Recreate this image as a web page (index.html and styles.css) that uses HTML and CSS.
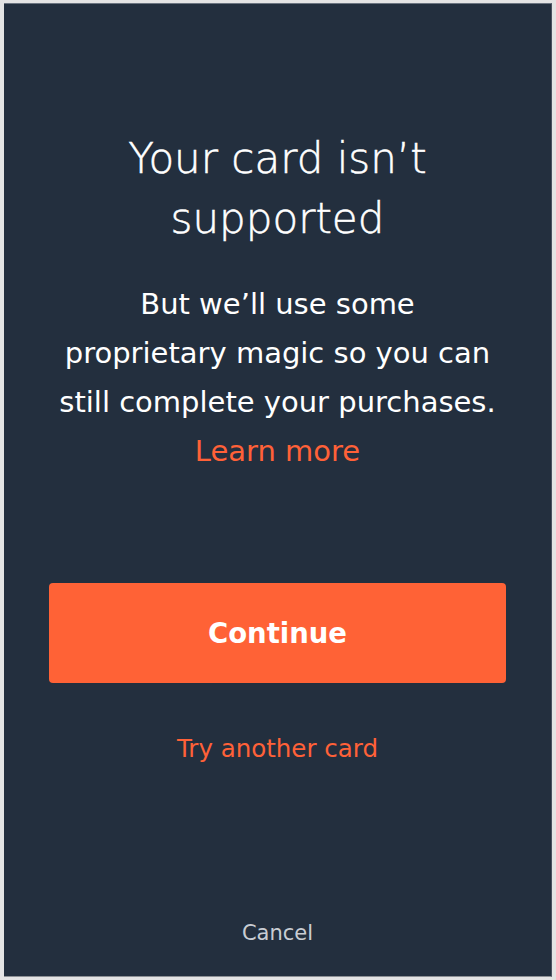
FILE: index.html
```html
<!DOCTYPE html>
<html>
<head>
<meta charset="utf-8">
<link rel="stylesheet" href="styles.css">
</head>
<body>
<div class="frame">
  <main class="panel">
    <h1 class="title">Your card isn’t<br>supported</h1>
    <p class="body">But we’ll use some<br>proprietary magic so you can<br>still complete your purchases.<br><a class="link" href="#">Learn more</a></p>
    <button class="primary">Continue</button>
    <a class="secondary" href="#">Try another card</a>
    <div class="spacer"></div>
    <a class="cancel" href="#">Cancel</a>
  </main>
</div>
</body>
</html>
```
FILE: styles.css
```css
html, body {
  margin: 0;
  padding: 0;
  background: #e4e4e4;
}
.frame {
  width: 556px;
  height: 980px;
  padding: 3px 4px 3px 4px;
  box-sizing: border-box;
}
.panel {
  height: 974px;
  width: 548px;
  box-sizing: border-box;
  background: #232f3e;
  border-top: 1px solid #6b7480;
  border-right: 1px solid #4a5362;
  border-bottom: 1px solid #8d9196;
  display: flex;
  flex-direction: column;
  align-items: center;
  font-family: "DejaVu Sans", "Open Sans", sans-serif;
  color: #ffffff;
}
.title {
  margin: 125px 0 0;
  font-size: 42px;
  font-weight: 200;
  line-height: 60px;
  text-align: center;
  -webkit-text-stroke: 0.5px #ffffff;
}
.body {
  margin: 31px 0 0;
  font-size: 29px;
  line-height: 49px;
  text-align: center;
  font-weight: 400;
}
.link {
  color: #ff6138;
  text-decoration: none;
}
.primary {
  margin-top: 107px;
  width: 457px;
  height: 100px;
  border: none;
  border-radius: 4px;
  background: #ff6236;
  color: #ffffff;
  font-family: "DejaVu Sans", "Open Sans", sans-serif;
  font-weight: 700;
  font-size: 27.5px;
}
.secondary {
  margin-top: 46px;
  color: #ff6138;
  text-decoration: none;
  font-size: 24.5px;
  line-height: 40px;
}
.spacer {
  flex: 1;
}
.cancel {
  color: #c9cdd3;
  text-decoration: none;
  font-size: 21px;
  line-height: 30px;
  margin-bottom: 28px;
}
```
